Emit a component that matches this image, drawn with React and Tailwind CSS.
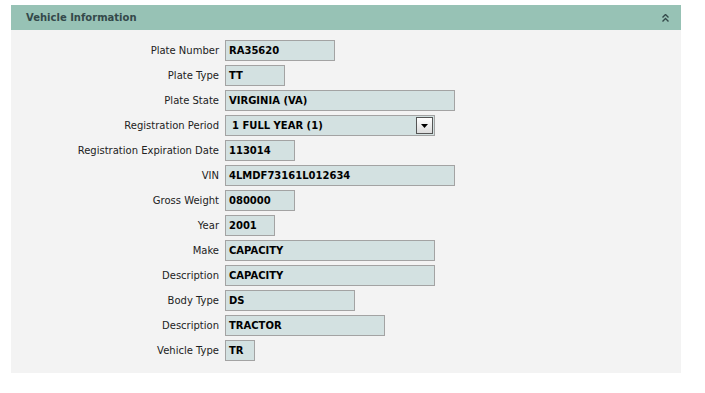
import React from 'react';

const rows = [
  { label: 'Plate Number', value: 'RA35620', w: 'w-[110px]' },
  { label: 'Plate Type', value: 'TT', w: 'w-[60px]' },
  { label: 'Plate State', value: 'VIRGINIA (VA)', w: 'w-[230px]' },
  { label: 'Registration Period', value: '1 FULL YEAR (1)', w: 'w-[210px]', select: true },
  { label: 'Registration Expiration Date', value: '113014', w: 'w-[70px]' },
  { label: 'VIN', value: '4LMDF73161L012634', w: 'w-[230px]' },
  { label: 'Gross Weight', value: '080000', w: 'w-[70px]' },
  { label: 'Year', value: '2001', w: 'w-[50px]' },
  { label: 'Make', value: 'CAPACITY', w: 'w-[210px]' },
  { label: 'Description', value: 'CAPACITY', w: 'w-[210px]' },
  { label: 'Body Type', value: 'DS', w: 'w-[130px]' },
  { label: 'Description', value: 'TRACTOR', w: 'w-[160px]' },
  { label: 'Vehicle Type', value: 'TR', w: 'w-[30px]' },
];

const Field = ({ row }) => (
  <div className="flex items-center h-[25px]">
    <div className="w-[214px] pr-[6px] text-right text-[10px] text-[#222]">{row.label}</div>
    <div
      className={`${row.w} h-[21px] border border-[#a3a3a3] bg-[#d3e1e1] flex items-center pl-[3px] text-[10px] font-bold text-black`}
    >
      <span className={row.select ? 'pl-[3px] flex-1' : 'flex-1'}>{row.value}</span>
      {row.select && (
        <div className="w-[17px] h-[17px] mr-[1px] border border-[#555] bg-gradient-to-b from-white to-[#dcdcdc] flex items-center justify-center">
          <svg width="7" height="4" viewBox="0 0 7 4">
            <path d="M0 0 H7 L3.5 4 Z" fill="#000" />
          </svg>
        </div>
      )}
    </div>
  </div>
);

export default function App() {
  return (
    <div className="w-[705px] h-[393px] bg-white pt-[5px] pl-[11px]" style={{ fontFamily: 'Tahoma, "DejaVu Sans", sans-serif' }}>
      <div className="w-[670px]">
        <div className="h-[25px] bg-[#97c2b5] flex items-center justify-between pl-[15px] pr-[12px]">
          <span className="text-[10px] font-bold text-[#34494a]">Vehicle Information</span>
          <svg width="7" height="8" viewBox="0 0 7 8" className="text-[#34494a]">
            <path d="M0.5 3.5 L3.5 0.5 L6.5 3.5 M0.5 7.5 L3.5 4.5 L6.5 7.5" stroke="currentColor" strokeWidth="1.4" fill="none" />
          </svg>
        </div>
        <div className="bg-[#f3f3f3] pt-[8px] pb-[10px]">
          {rows.map((r, i) => (
            <Field key={i} row={r} />
          ))}
        </div>
      </div>
    </div>
  );
}
